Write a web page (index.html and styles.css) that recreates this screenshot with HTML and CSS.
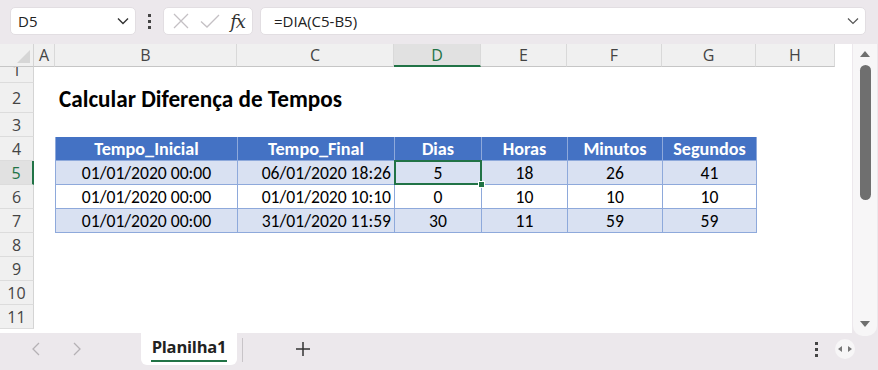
FILE: index.html
```html
<!DOCTYPE html>
<html lang="pt">

<head>
    <meta charset="UTF-8">
    <meta name="viewport" content="width=device-width, initial-scale=1.0">
    <title>Calcular Diferença de Tempos</title>
    <link rel="stylesheet" href="styles.css">
</head>

<body>
    <div class="app">

        <div class="formula-bar">
            <div class="name-box">
                <span>D5</span>
                <svg class="chev" width="12" height="8" viewBox="0 0 12 8"><path d="M1 1.5 L6 6.5 L11 1.5" fill="none" stroke="#333" stroke-width="1.4"/></svg>
            </div>
            <div class="vdots"><i></i><i></i><i></i></div>
            <div class="fx-box">
                <svg width="16" height="16" viewBox="0 0 16 16"><path d="M1 1 L15 15 M15 1 L1 15" stroke="#c4c0c4" stroke-width="1.3"/></svg>
                <svg width="20" height="16" viewBox="0 0 20 16"><path d="M1 8.5 L7 14 L19 2" fill="none" stroke="#c4c0c4" stroke-width="1.3"/></svg>
                <span class="fx">fx</span>
            </div>
            <div class="formula-input">
                <span>=DIA(C5-B5)</span>
                <svg class="chev" width="12" height="8" viewBox="0 0 12 8"><path d="M1 1.5 L6 6.5 L11 1.5" fill="none" stroke="#555" stroke-width="1.2"/></svg>
            </div>
        </div>

        <div class="workspace">
            <div class="sheet">
                <div class="corner"><span></span></div>
                <div class="col-head">A</div>
                <div class="col-head">B</div>
                <div class="col-head">C</div>
                <div class="col-head active">D</div>
                <div class="col-head">E</div>
                <div class="col-head">F</div>
                <div class="col-head">G</div>
                <div class="col-head">H</div>
                <div class="col-head blank"></div>

                <div class="row-head cut" style="grid-row: 2"><span>1</span></div>
                <div class="row-head" style="grid-row: 3">2</div>
                <div class="row-head" style="grid-row: 4">3</div>
                <div class="row-head" style="grid-row: 5">4</div>
                <div class="row-head active" style="grid-row: 6">5</div>
                <div class="row-head" style="grid-row: 7">6</div>
                <div class="row-head" style="grid-row: 8">7</div>
                <div class="row-head" style="grid-row: 9">8</div>
                <div class="row-head" style="grid-row: 10">9</div>
                <div class="row-head" style="grid-row: 11">10</div>
                <div class="row-head" style="grid-row: 12">11</div>

                <h1 class="title">Calcular Diferença de Tempos</h1>

                <div class="table">
                    <div class="th">Tempo_Inicial</div>
                    <div class="th">Tempo_Final</div>
                    <div class="th">Dias</div>
                    <div class="th">Horas</div>
                    <div class="th">Minutos</div>
                    <div class="th">Segundos</div>

                    <div class="td band">01/01/2020 00:00</div>
                    <div class="td band right">06/01/2020 18:26</div>
                    <div class="td band selected">5<span class="handle"></span></div>
                    <div class="td band">18</div>
                    <div class="td band">26</div>
                    <div class="td band">41</div>

                    <div class="td">01/01/2020 00:00</div>
                    <div class="td right">01/01/2020 10:10</div>
                    <div class="td">0</div>
                    <div class="td">10</div>
                    <div class="td">10</div>
                    <div class="td">10</div>

                    <div class="td band">01/01/2020 00:00</div>
                    <div class="td band right">31/01/2020 11:59</div>
                    <div class="td band">30</div>
                    <div class="td band">11</div>
                    <div class="td band">59</div>
                    <div class="td band">59</div>
                </div>
            </div>

            <div class="vscroll">
                <span class="arrow up"></span>
                <span class="thumb"></span>
                <span class="arrow down"></span>
            </div>
        </div>

        <div class="tab-bar">
            <div class="nav">
                <svg width="10" height="14" viewBox="0 0 10 14"><path d="M8 1 L2 7 L8 13" fill="none" stroke="#b5b1b5" stroke-width="1.3"/></svg>
                <svg width="10" height="14" viewBox="0 0 10 14"><path d="M2 1 L8 7 L2 13" fill="none" stroke="#b5b1b5" stroke-width="1.3"/></svg>
            </div>
            <div class="tab">Planilha1</div>
            <div class="tab-sep"></div>
            <div class="add">
                <svg width="16" height="16" viewBox="0 0 16 16"><path d="M8 1 V15 M1 8 H15" stroke="#333" stroke-width="1.5"/></svg>
            </div>
            <div class="tab-tools">
                <div class="vdots small"><i></i><i></i><i></i></div>
                <div class="hscroll-btn">
                    <svg width="14" height="8" viewBox="0 0 14 8"><path d="M0 4 L4 1 V7 Z M14 4 L10 1 V7 Z" fill="#777"/></svg>
                </div>
            </div>
        </div>

    </div>
</body>

</html>
```

FILE: styles.css
```css
* {
    margin: 0;
    padding: 0;
    box-sizing: border-box;
}

body {
    width: 878px;
    height: 370px;
    overflow: hidden;
    background-color: #ece8ec;
    font-family: Carlito, Calibri, "Lato", sans-serif;
    color: #000;
}

.app {
    display: flex;
    flex-direction: column;
    height: 370px;
}

/* formula bar */

.formula-bar {
    height: 44px;
    display: flex;
    align-items: center;
    padding: 0 12px 2px 10px;
    font-family: "Open Sans", sans-serif;
    font-size: 15px;
    color: #222;
}

.name-box,
.fx-box,
.formula-input {
    height: 28px;
    background-color: #fff;
    border: 1px solid #e2dee2;
    border-radius: 5px;
    display: flex;
    align-items: center;
}

.name-box {
    width: 126px;
    padding: 0 6px 0 7px;
    justify-content: space-between;
}

.vdots {
    width: 27px;
    display: flex;
    flex-direction: column;
    align-items: center;
    gap: 3px;
}

.vdots i {
    width: 3px;
    height: 3px;
    background-color: #444;
}

.fx-box {
    width: 90px;
    padding: 0 7px 0 9px;
    justify-content: space-between;
}

.fx {
    font-family: "DejaVu Serif", serif;
    font-style: italic;
    font-size: 18px;
    color: #333;
    letter-spacing: -1px;
}

.formula-input {
    flex: 1;
    margin-left: 7px;
    padding: 0 6px 0 13px;
    justify-content: space-between;
}

/* workspace */

.workspace {
    display: flex;
    height: 289px;
}

.sheet {
    width: 852px;
    background-color: #fff;
    display: grid;
    grid-template-columns: 34px 21px 182px 157px 87px 86px 95px 94px 79px 17px;
    grid-template-rows: 23px 16px 30px repeat(9, 24px);
    overflow: hidden;
}

.corner {
    background-color: #f0f0f0;
    border-right: 1px solid #d4d4d4;
    border-bottom: 1px solid #c6c6c6;
    position: relative;
}

.corner span {
    position: absolute;
    right: 3px;
    bottom: 3px;
    width: 0;
    height: 0;
    border-left: 13px solid transparent;
    border-bottom: 13px solid #d6d6d6;
}

.col-head {
    background-color: #f0f0f0;
    border-right: 1px solid #d9d9d9;
    border-bottom: 1px solid #c6c6c6;
    font-family: "Open Sans", sans-serif;
    font-size: 16px;
    color: #444;
    display: flex;
    align-items: center;
    justify-content: center;
}

.col-head.active {
    background-color: #e1e1e1;
    color: #217346;
    border-bottom: 2px solid #217346;
}

.col-head.blank {
    background-color: #fff;
    border-right: none;
    border-bottom: none;
}

.row-head {
    grid-column: 1;
    background-color: #f0f0f0;
    border-right: 1px solid #d4d4d4;
    border-bottom: 1px solid #dcdcdc;
    font-family: "Open Sans", sans-serif;
    font-size: 16px;
    color: #444;
    display: flex;
    align-items: center;
    justify-content: center;
    overflow: hidden;
}

.row-head.cut span {
    margin-top: -9px;
}

.row-head.active {
    background-color: #e1e1e1;
    color: #217346;
    border-right: 2px solid #217346;
}

.title {
    grid-row: 3;
    grid-column: 3 / 10;
    font-size: 23.2px;
    font-weight: bold;
    align-self: center;
    padding-left: 4px;
    padding-top: 2px;
}

.table {
    grid-row: 5 / 9;
    grid-column: 3 / 9;
    display: grid;
    grid-template-columns: 182px 157px 87px 86px 95px 94px;
    grid-template-rows: repeat(4, 24px);
    border-left: 1px solid #8ea9db;
    font-size: 17.6px;
}

.th,
.td {
    border-right: 1px solid #8ea9db;
    border-bottom: 1px solid #8ea9db;
    display: flex;
    align-items: center;
    justify-content: center;
    padding-top: 1px;
}

.th {
    background-color: #4472c4;
    color: #fff;
    font-weight: bold;
    font-size: 18.2px;
}

.td.band {
    background-color: #d9e1f2;
}

.td.right {
    justify-content: flex-end;
    padding-right: 3px;
}

.td.selected {
    position: relative;
}

.td.selected::after {
    content: "";
    position: absolute;
    left: -1px;
    top: -1px;
    right: -1px;
    bottom: -1px;
    border: 2px solid #217346;
}

.handle {
    position: absolute;
    right: -4px;
    bottom: -4px;
    width: 7px;
    height: 7px;
    background-color: #217346;
    border: 1px solid #fff;
    z-index: 1;
}

/* vertical scrollbar */

.vscroll {
    width: 24px;
    margin-left: 1px;
    height: 292px;
    background-color: #f7f6f7;
    border-radius: 0 0 10px 10px;
    display: flex;
    flex-direction: column;
    align-items: center;
    padding: 7px 0 9px;
}

.arrow {
    width: 0;
    height: 0;
    border-left: 5px solid transparent;
    border-right: 5px solid transparent;
}

.arrow.up {
    border-bottom: 6px solid #6f6f6f;
}

.arrow.down {
    border-top: 6px solid #6f6f6f;
    margin-top: auto;
}

.thumb {
    width: 11px;
    height: 135px;
    margin-top: 8px;
    background-color: #6f6f6f;
    border-radius: 6px;
}

/* sheet tabs */

.tab-bar {
    flex: 1;
    display: flex;
    align-items: flex-start;
    margin-top: -3px;
}

.nav {
    width: 141px;
    height: 35px;
    display: flex;
    align-items: center;
    gap: 31px;
    padding-left: 31px;
    padding-top: 2px;
}

.tab {
    width: 96px;
    height: 35px;
    background-color: #fff;
    border-radius: 0 0 6px 6px;
    font-family: "Open Sans", sans-serif;
    font-weight: bold;
    font-size: 16.5px;
    color: #222;
    text-align: center;
    line-height: 33px;
    letter-spacing: -0.2px;
    position: relative;
}

.tab::after {
    content: "";
    position: absolute;
    left: 10px;
    right: 10px;
    bottom: 3px;
    height: 2px;
    background-color: #217346;
}

.tab-sep {
    width: 1px;
    height: 24px;
    margin: 8px 0 0 5px;
    background-color: #c8c4c8;
}

.add {
    width: 120px;
    height: 35px;
    display: flex;
    align-items: center;
    justify-content: center;
    padding-top: 2px;
}

.tab-tools {
    margin-left: auto;
    display: flex;
    align-items: center;
    height: 38px;
    padding-right: 23px;
}

.vdots.small {
    width: 14px;
    gap: 3px;
    margin-right: 12px;
}

.hscroll-btn {
    width: 20px;
    height: 20px;
    border-radius: 50%;
    background-color: #f7f6f7;
    display: flex;
    align-items: center;
    justify-content: center;
}
```
